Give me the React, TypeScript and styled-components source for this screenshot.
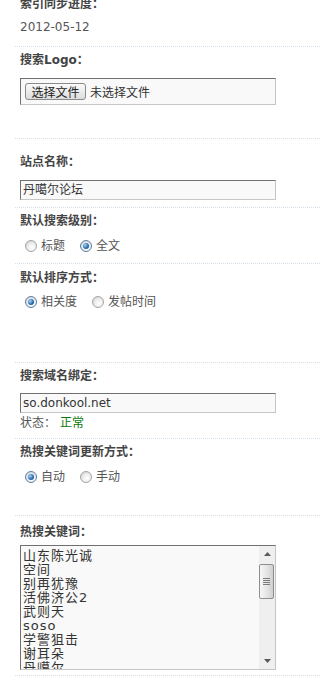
import React from "react";
import styled, { createGlobalStyle, css } from "styled-components";

const GlobalStyle = createGlobalStyle`
  html, body {
    margin: 0;
    padding: 0;
    background: #fff;
  }
  body {
    font-family: "DejaVu Sans", "Noto Sans CJK SC", sans-serif;
    font-size: 12px;
    color: #555;
    overflow: hidden;
  }
`;

const Page = styled.div`
  padding-left: 15px;
  margin-top: -12px;
`;

const Row = styled.div<{ $top: number; $bottom: number }>`
  padding: ${(p) => p.$top}px 0 ${(p) => p.$bottom}px 5px;
  border-bottom: 1px dotted #d3e0ea;
`;

const Label = styled.div`
  font-weight: bold;
  line-height: 16px;
  color: #444;
`;

const Field = styled.div<{ $gap: number }>`
  margin-top: ${(p) => p.$gap}px;
`;

const Value = styled.div`
  line-height: 16px;
  color: #555;
`;

const boxBorder = css`
  box-sizing: border-box;
  width: 256px;
  border: 1px solid;
  border-color: #707070 #c6c6c6 #c6c6c6 #707070;
  background: #f9f9f9;
`;

const TextInput = styled.div`
  ${boxBorder}
  height: 20px;
  padding-left: 2px;
  line-height: 18px;
  color: #333;
  white-space: nowrap;
  overflow: hidden;
`;

const FileBox = styled.div`
  ${boxBorder}
  height: 27px;
  display: flex;
  align-items: center;
  gap: 4px;
  padding-left: 4px;
  color: #333;
`;

const FileButton = styled.button`
  box-sizing: border-box;
  width: 61px;
  height: 17px;
  padding: 0;
  border: 1px solid #8a8a8a;
  border-radius: 3px;
  background: linear-gradient(#fbfbfb, #dcdcdc);
  font-family: "Noto Sans CJK SC", sans-serif;
  font-size: 12px;
  line-height: 15px;
  color: #222;
`;

const RadioGroup = styled.div`
  display: flex;
  align-items: center;
  height: 16px;
  padding-left: 5px;
  gap: 15px;
`;

const Option = styled.label`
  display: inline-flex;
  align-items: center;
  gap: 4px;
  color: #555;
  line-height: 16px;
`;

const Radio = styled.span<{ $checked?: boolean }>`
  box-sizing: border-box;
  width: 12px;
  height: 12px;
  border-radius: 50%;
  border: 1px solid ${(p) => (p.$checked ? "#5a7fa6" : "#a4a4a4")};
  background: radial-gradient(circle at 60% 65%, #ffffff 0%, #eeeeee 45%, #c9c9c9 100%);
  display: inline-flex;
  align-items: center;
  justify-content: center;

  &::after {
    content: "";
    display: ${(p) => (p.$checked ? "block" : "none")};
    width: 6px;
    height: 6px;
    border-radius: 50%;
    background: radial-gradient(circle at 35% 35%, #a8d6f7 0%, #2b70b4 55%, #0d3a6e 100%);
  }
`;

const Status = styled.div`
  line-height: 16px;
  color: #555;
`;

const StatusOk = styled.span`
  color: #0a7a0a;
  margin-left: 4px;
`;

const ListBox = styled.div`
  ${boxBorder}
  height: 125px;
  display: flex;
`;

const Lines = styled.div`
  flex: 1;
  overflow: hidden;
  padding: 3px 2px 0;
  font-size: 13px;
  letter-spacing: 1px;
  line-height: 14px;
  color: #333;
`;

const Line = styled.div`
  white-space: nowrap;
`;

const ScrollBar = styled.div`
  width: 16px;
  display: flex;
  flex-direction: column;
  background: #efefef;
`;

const ScrollButton = styled.div`
  height: 16px;
  display: flex;
  align-items: center;
  justify-content: center;
`;

const Thumb = styled.div`
  box-sizing: border-box;
  height: 35px;
  margin: 2px 1px 0 0;
  border: 1px solid #8e8e8e;
  border-radius: 2px;
  background: linear-gradient(90deg, #f7f7f7, #e2e2e2 60%, #cfcfcf);
  display: flex;
  align-items: center;
  justify-content: center;
`;

const Grip = styled.span`
  width: 7px;
  height: 7px;
  background: repeating-linear-gradient(#7d7d7d 0 1px, transparent 1px 2px);
`;

const Track = styled.div`
  flex: 1;
`;

function Arrow({ down }: { down?: boolean }) {
  return (
    <svg width="7" height="4" viewBox="0 0 7 4">
      <polygon points={down ? "0,0 7,0 3.5,4" : "0,4 7,4 3.5,0"} fill="#5a5a5a" />
    </svg>
  );
}

function RadioOption({ text, checked }: { text: string; checked?: boolean }) {
  return (
    <Option>
      <Radio $checked={checked} />
      {text}
    </Option>
  );
}

const hotWords = [
  "山东陈光诚",
  "空间",
  "别再犹豫",
  "活佛济公2",
  "武则天",
  "soso",
  "学警狙击",
  "谢耳朵",
  "丹噶尔",
];

export default function App() {
  return (
    <>
      <GlobalStyle />
      <Page>
        <Row $top={8} $bottom={11}>
          <Label>索引同步进度：</Label>
          <Field $gap={7}>
            <Value>2012-05-12</Value>
          </Field>
        </Row>

        <Row $top={5} $bottom={33}>
          <Label>搜索Logo：</Label>
          <Field $gap={10}>
            <FileBox>
              <FileButton type="button">选择文件</FileButton>
              <span>未选择文件</span>
            </FileBox>
          </Field>
        </Row>

        <Row $top={15} $bottom={7}>
          <Label>站点名称：</Label>
          <Field $gap={10}>
            <TextInput>丹噶尔论坛</TextInput>
          </Field>
        </Row>

        <Row $top={5} $bottom={9}>
          <Label>默认搜索级别：</Label>
          <Field $gap={9}>
            <RadioGroup>
              <RadioOption text="标题" />
              <RadioOption text="全文" checked />
            </RadioGroup>
          </Field>
        </Row>

        <Row $top={6} $bottom={52}>
          <Label>默认排序方式：</Label>
          <Field $gap={8}>
            <RadioGroup>
              <RadioOption text="相关度" checked />
              <RadioOption text="发帖时间" />
            </RadioGroup>
          </Field>
        </Row>

        <Row $top={5} $bottom={7}>
          <Label>搜索域名绑定：</Label>
          <Field $gap={9}>
            <TextInput>so.donkool.net</TextInput>
          </Field>
          <Field $gap={2}>
            <Status>
              状态：<StatusOk>正常</StatusOk>
            </Status>
          </Field>
        </Row>

        <Row $top={5} $bottom={30}>
          <Label>热搜关键词更新方式：</Label>
          <Field $gap={9}>
            <RadioGroup>
              <RadioOption text="自动" checked />
              <RadioOption text="手动" />
            </RadioGroup>
          </Field>
        </Row>

        <Row $top={8} $bottom={5}>
          <Label>热搜关键词：</Label>
          <Field $gap={5}>
            <ListBox>
              <Lines>
                {hotWords.map((w) => (
                  <Line key={w}>{w}</Line>
                ))}
              </Lines>
              <ScrollBar>
                <ScrollButton>
                  <Arrow />
                </ScrollButton>
                <Thumb>
                  <Grip />
                </Thumb>
                <Track />
                <ScrollButton>
                  <Arrow down />
                </ScrollButton>
              </ScrollBar>
            </ListBox>
          </Field>
        </Row>
      </Page>
    </>
  );
}
